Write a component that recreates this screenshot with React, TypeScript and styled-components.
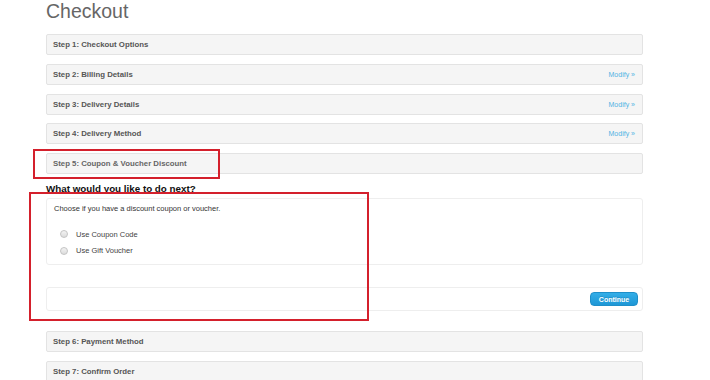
import React from "react";
import styled, { createGlobalStyle } from "styled-components";

const Global = createGlobalStyle`
  html, body { margin: 0; padding: 0; background: #fff; }
  body { font-family: "Liberation Sans", Arial, sans-serif; color: #555; }
`;

const Page = styled.div`
  position: relative;
  width: 710px;
  height: 380px;
  overflow: hidden;
  padding: 0 67px 0 46px;
  box-sizing: border-box;
`;

const Title = styled.h1`
  margin: 0 0 12px;
  font-size: 19.5px;
  font-weight: normal;
  line-height: 22px;
  color: #666;
`;

const Steps = styled.div`
  display: flex;
  flex-direction: column;
`;

const StepBar = styled.div<{ $gap?: number }>`
  height: 21px;
  flex: none;
  box-sizing: border-box;
  margin-bottom: ${(p) => p.$gap ?? 8.75}px;
  background: #f5f5f5;
  border: 1px solid #e3e3e3;
  border-radius: 2px;
  display: flex;
  align-items: center;
  justify-content: space-between;
  padding: 0 7px 0 6px;
`;

const StepLabel = styled.span<{ $active?: boolean }>`
  font-size: 7.8px;
  font-weight: bold;
  color: ${(p) => (p.$active ? "#666" : "#555")};
`;

const Modify = styled.span`
  font-size: 7px;
  color: #4fb3e3;
`;

const Heading = styled.h2`
  margin: 0;
  height: 21px;
  flex: none;
  display: flex;
  align-items: center;
  font-size: 9.8px;
  font-weight: bold;
  color: #111;
  padding-top: 2px;
  box-sizing: border-box;
`;

const ContentPanel = styled.div`
  height: 67px;
  flex: none;
  box-sizing: border-box;
  border: 1px solid #eee;
  border-radius: 3px;
  padding: 5px 7px;
  display: flex;
  flex-direction: column;
  margin-bottom: 22px;
`;

const Intro = styled.p`
  margin: 0 0 13px;
  font-size: 7.5px;
  color: #333;
  line-height: 9px;
`;

const RadioRow = styled.label`
  display: flex;
  align-items: center;
  gap: 8px;
  height: 16.5px;
  padding-left: 6px;
  font-size: 7.5px;
  color: #444;
`;

const Radio = styled.span`
  width: 6px;
  height: 6px;
  border-radius: 50%;
  border: 1px solid #c4c4c4;
  background: linear-gradient(#f3f3f3, #dcdcdc);
`;

const ActionPanel = styled.div`
  height: 24px;
  flex: none;
  box-sizing: border-box;
  border: 1px solid #eee;
  border-radius: 3px;
  display: flex;
  align-items: center;
  justify-content: flex-end;
  padding-right: 4px;
  margin-bottom: 20px;
`;

const Continue = styled.button`
  width: 48px;
  height: 14px;
  border: 1px solid #1f8fc9;
  border-radius: 4px;
  background: linear-gradient(#33aee8, #1e97d6);
  color: #fff;
  font-family: "Liberation Sans", Arial, sans-serif;
  font-size: 7px;
  font-weight: bold;
  padding: 0;
  text-shadow: 0 -1px 0 rgba(0, 0, 0, 0.15);
`;

const Annotation = styled.div<{ $x: number; $y: number; $w: number; $h: number }>`
  position: absolute;
  left: ${(p) => p.$x}px;
  top: ${(p) => p.$y}px;
  width: ${(p) => p.$w}px;
  height: ${(p) => p.$h}px;
  box-sizing: border-box;
  border: 2px solid #d4202c;
  pointer-events: none;
`;

const steps = [
  { label: "Step 1: Checkout Options", modify: false },
  { label: "Step 2: Billing Details", modify: true },
  { label: "Step 3: Delivery Details", modify: true },
  { label: "Step 4: Delivery Method", modify: true },
];

export default function App() {
  return (
    <>
      <Global />
      <Page>
        <Title>Checkout</Title>
        <Steps>
          {steps.map((s) => (
            <StepBar key={s.label}>
              <StepLabel>{s.label}</StepLabel>
              {s.modify && <Modify>Modify »</Modify>}
            </StepBar>
          ))}
          <StepBar $gap={3}>
            <StepLabel $active>Step 5: Coupon &amp; Voucher Discount</StepLabel>
          </StepBar>
          <Heading>What would you like to do next?</Heading>
          <ContentPanel>
            <Intro>Choose if you have a discount coupon or voucher.</Intro>
            <RadioRow>
              <Radio />
              Use Coupon Code
            </RadioRow>
            <RadioRow>
              <Radio />
              Use Gift Voucher
            </RadioRow>
          </ContentPanel>
          <ActionPanel>
            <Continue>Continue</Continue>
          </ActionPanel>
          <StepBar>
            <StepLabel>Step 6: Payment Method</StepLabel>
          </StepBar>
          <StepBar>
            <StepLabel>Step 7: Confirm Order</StepLabel>
          </StepBar>
        </Steps>
        <Annotation $x={33} $y={149} $w={187} $h={30} />
        <Annotation $x={29} $y={192} $w={340} $h={129} />
      </Page>
    </>
  );
}
